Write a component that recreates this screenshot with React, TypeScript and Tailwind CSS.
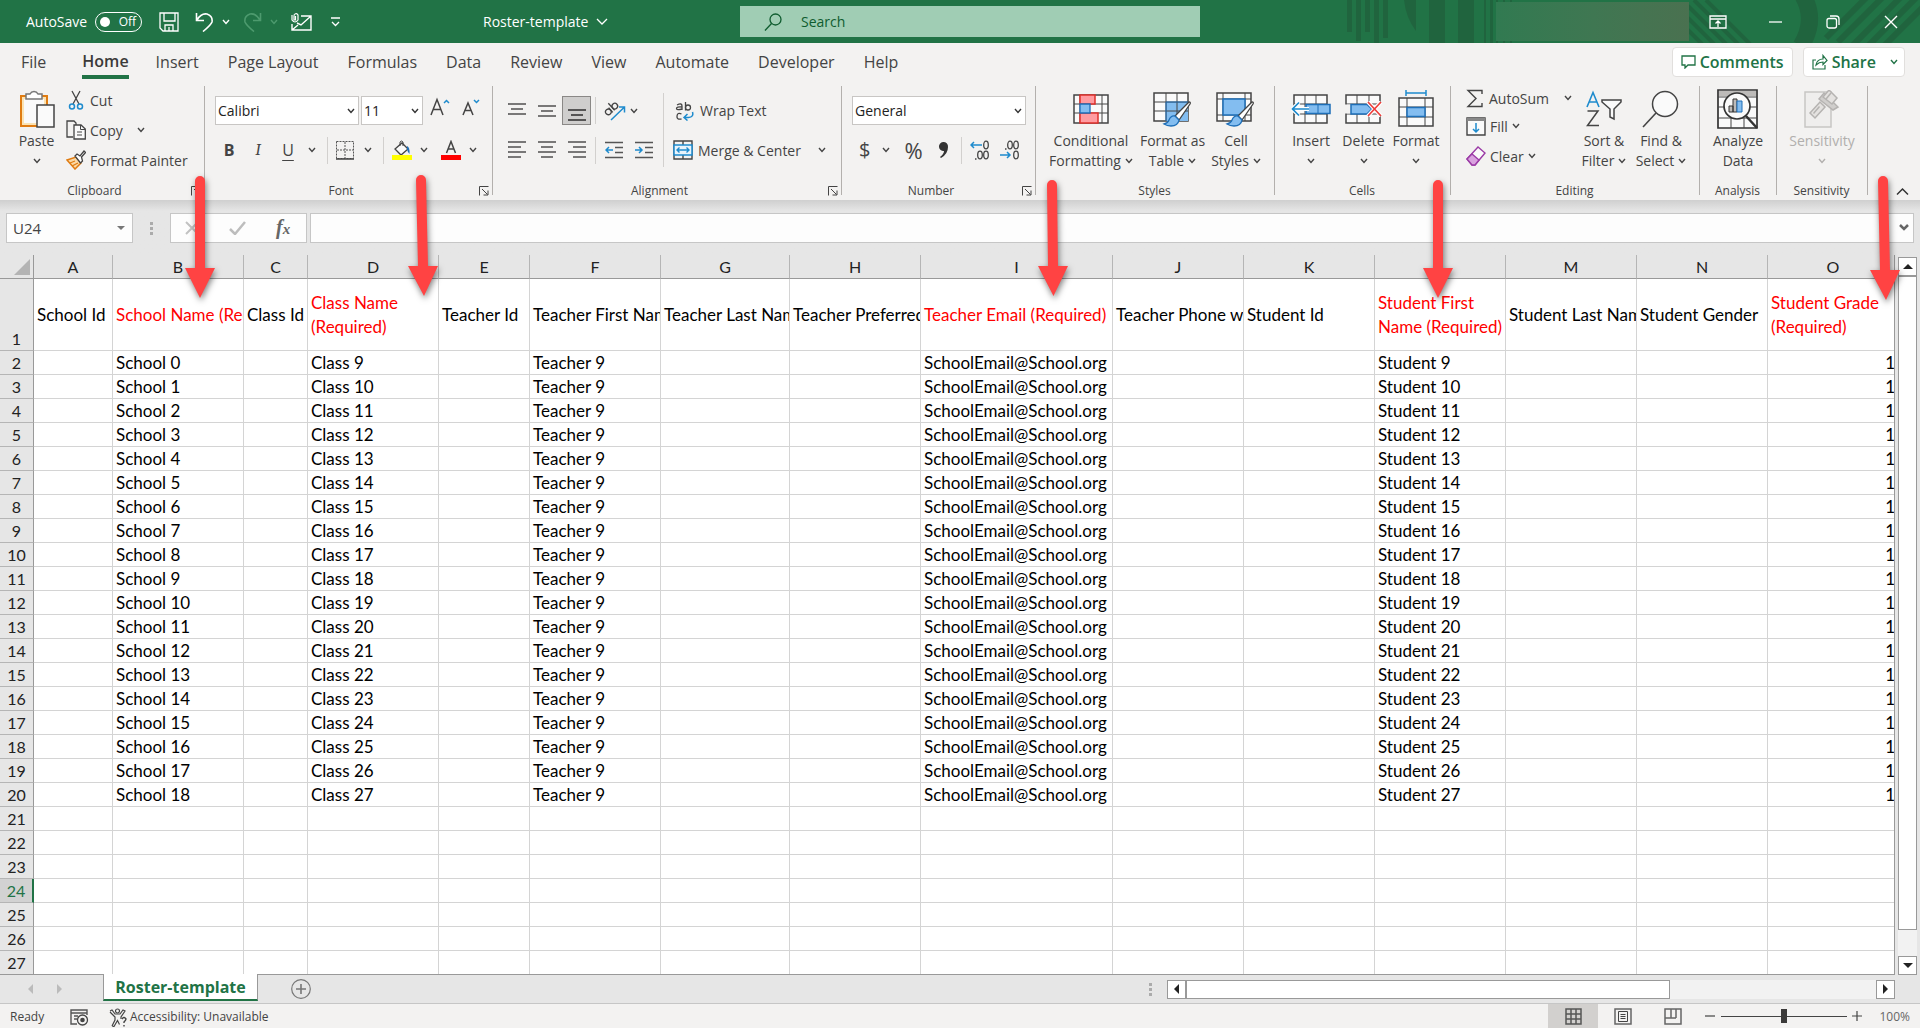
import React from "react";

const MENU_TABS = ["Insert", "Page Layout", "Formulas", "Data", "Review", "View", "Automate", "Developer", "Help"];

interface Column {
  letter: string;
  width: string;
  title: string;
  required?: boolean;
  wrap?: boolean;
}

const COLUMNS: Column[] = [
  { letter: "A", width: "w-[79px]", title: "School Id" },
  { letter: "B", width: "w-[131px]", title: "School Name (Required)", required: true },
  { letter: "C", width: "w-[64px]", title: "Class Id" },
  { letter: "D", width: "w-[131px]", title: "Class Name (Required)", required: true, wrap: true },
  { letter: "E", width: "w-[91px]", title: "Teacher Id" },
  { letter: "F", width: "w-[131px]", title: "Teacher First Name" },
  { letter: "G", width: "w-[129px]", title: "Teacher Last Name" },
  { letter: "H", width: "w-[131px]", title: "Teacher Preferred Name" },
  { letter: "I", width: "w-[192px]", title: "Teacher Email (Required)", required: true },
  { letter: "J", width: "w-[131px]", title: "Teacher Phone w/ Code" },
  { letter: "K", width: "w-[131px]", title: "Student Id" },
  { letter: "L", width: "w-[131px]", title: "Student First Name (Required)", required: true, wrap: true },
  { letter: "M", width: "w-[131px]", title: "Student Last Name" },
  { letter: "N", width: "w-[131px]", title: "Student Gender" },
  { letter: "O", width: "", title: "Student Grade (Required)", required: true, wrap: true },
];

const ROW_NUMBERS = Array.from({ length: 26 }, (_, i) => i + 2);
const SELECTED_ROW = 24;

function cellValue(letter: string, row: number) {
  if (row > 20) return "";
  switch (letter) {
    case "B":
      return `School ${row - 2}`;
    case "D":
      return `Class ${row + 7}`;
    case "F":
      return "Teacher 9";
    case "I":
      return "SchoolEmail@School.org";
    case "L":
      return `Student ${row + 7}`;
    case "O":
      return "1";
    default:
      return "";
  }
}

/* ---------- small shared pieces ---------- */

function Svg({ w, h, children, className = "" }: { w: number; h: number; children: React.ReactNode; className?: string }) {
  return (
    <svg width={w} height={h} viewBox={`0 0 ${w} ${h}`} fill="none" className={`shrink-0 ${className}`} aria-hidden="true">
      {children}
    </svg>
  );
}

function Chevron({ className = "" }: { className?: string }) {
  return (
    <Svg w={8} h={6} className={className}>
      <path d="M1 1l3 3.5L7 1" stroke="currentColor" strokeWidth="1.4" />
    </Svg>
  );
}

function Launcher() {
  return (
    <button aria-label="More options" className="flex w-[14px] justify-center">
      <Svg w={10} h={10}>
        <path d="M.5 9.5V.5h9M3 3l5.5 5.5M9 4.5V9H4.5" stroke="#444" />
      </Svg>
    </button>
  );
}

function Group({ label, width, launcher, children }: { label: string; width: string; launcher?: boolean; children: React.ReactNode }) {
  return (
    <section className={`flex h-[109px] shrink-0 flex-col border-r border-[#b3b0ad] ${width}`}>
      <div className="flex flex-1">{children}</div>
      <div className="flex h-[9px] items-center pr-px text-[12px] leading-[9px] text-[#444]">
        <span className="flex-1 text-center">{label}</span>
        {launcher && <Launcher />}
      </div>
    </section>
  );
}

function LargeButton({ icon, first, second, menu, width, disabled }: { icon: React.ReactNode; first: string; second?: string; menu?: boolean; width: string; disabled?: boolean }) {
  return (
    <button disabled={disabled} className={`flex shrink-0 flex-col items-center whitespace-nowrap leading-5 ${width} ${disabled ? "text-[#b1afad]" : ""}`}>
      <span className="flex h-[45px] items-center justify-center">{icon}</span>
      <span>{first}</span>
      <span className="flex h-5 items-center gap-1">
        {second}
        {menu && <Chevron />}
      </span>
    </button>
  );
}

function Divider({ className }: { className: string }) {
  return <span className={`w-px shrink-0 bg-[#d2d0ce] ${className}`} />;
}

/* ---------- ribbon icons ---------- */

function Lines({ rows, color = "#444" }: { rows: number[][]; color?: string }) {
  return (
    <Svg w={18} h={18}>
      {rows.map(([x, y, len]) => (
        <path key={y} d={`M${x} ${y}h${len}`} stroke={color} strokeWidth="1.4" />
      ))}
    </Svg>
  );
}

function PasteIcon() {
  return (
    <Svg w={36} h={40}>
      <path d="M2 7h26v30H2z" fill="#fbe3b3" stroke="#e07c12" strokeWidth="2" />
      <path d="M5 10h20v24H5z" fill="#fafafa" />
      <path d="M7 10V5h4a4.500 4.500 0 0 1 8 0h4v5z" fill="#fff" stroke="#777" strokeWidth="1.500" />
      <path d="M18 16h17v22H18z" fill="#fafafa" stroke="#444" strokeWidth="1.500" />
    </Svg>
  );
}

function CutIcon() {
  return (
    <Svg w={20} h={20}>
      <path d="M6 1l7 13M14 1L7 14" stroke="#444" strokeWidth="1.300" />
      <circle cx="6" cy="16.500" r="2.500" stroke="#1e8bcd" strokeWidth="1.500" />
      <circle cx="14" cy="16.500" r="2.500" stroke="#1e8bcd" strokeWidth="1.500" />
    </Svg>
  );
}

function CopyIcon() {
  return (
    <Svg w={20} h={20}>
      <path d="M7 17H1V1h7l2 2v2" stroke="#444" strokeWidth="1.300" />
      <path d="M8 5h7l4.300 4v10H8z" fill="#fafafa" stroke="#444" strokeWidth="1.300" />
      <path d="M14.500 5v4.500H19M11 12h5M11 15h5" stroke="#444" />
    </Svg>
  );
}

function PainterIcon() {
  return (
    <Svg w={20} h={20}>
      <path d="M1 10l9-3 5 6-6 6z" fill="#fbd9a6" stroke="#e07c12" strokeWidth="1.500" />
      <path d="M4 13l5-2M6 16l6-3" stroke="#e07c12" strokeWidth="1.300" />
      <path d="M9 6l2-2 3 2 4-5 1.500 1.500-4 4.500 1 4-2 2z" fill="#fff" stroke="#444" strokeWidth="1.300" />
    </Svg>
  );
}

function GrowFontIcon({ shrink }: { shrink?: boolean }) {
  return (
    <Svg w={20} h={20}>
      {shrink ? (
        <>
          <path d="M2 19L7 7 12 19M3.800 14.500h6.400" stroke="#444" strokeWidth="1.500" />
          <path d="M13 4l2.500 2.500L18 4" stroke="#1e8bcd" strokeWidth="1.500" />
        </>
      ) : (
        <>
          <path d="M1 19L7 3.500 13 19M3.200 13.500h7.600" stroke="#444" strokeWidth="1.500" />
          <path d="M14 7l2.500-2.500L19 7" stroke="#1e8bcd" strokeWidth="1.500" />
        </>
      )}
    </Svg>
  );
}

function BordersIcon() {
  return (
    <Svg w={18} h={19}>
      <path d="M.5.5h17v17H.5zM9 1v16M1 9h16" stroke="#555" strokeDasharray="2 1" />
      <path d="M0 18h18" stroke="#444" strokeWidth="1.500" />
    </Svg>
  );
}

function BucketIcon() {
  return (
    <Svg w={20} h={20}>
      <path d="M3 9l7-6 6 6-7 6z" fill="#fafafa" stroke="#444" strokeWidth="1.300" />
      <path d="M8 6V2q1.500-2 3 0v4" stroke="#444" />
      <path d="M15 6q3 1 2.500 8-2-2-2.500-5z" fill="#1e6fb8" />
      <path d="M0 15h20v5H0z" fill="#ffff00" />
    </Svg>
  );
}

function FontColorIcon() {
  return (
    <Svg w={20} h={20}>
      <path d="M5.500 13L10 1.500 14.500 13M7 9h6" stroke="#444" strokeWidth="1.500" />
      <path d="M0 15h20v5H0z" fill="#ff0000" />
    </Svg>
  );
}

function OrientationIcon() {
  return (
    <Svg w={22} h={20}>
      <g stroke="#444" strokeWidth="1.300" transform="rotate(-42 8 9)">
        <circle cx="4" cy="8" r="2.800" />
        <path d="M7 5v6.300" />
        <path d="M9.800 1.500v9.500" />
        <circle cx="12.700" cy="8" r="2.800" />
      </g>
      <path d="M7 19L20 6.500M15 6h5.500v5.500" stroke="#1e8bcd" strokeWidth="1.500" />
    </Svg>
  );
}

function IndentIcon({ right }: { right?: boolean }) {
  return (
    <Svg w={18} h={18}>
      <path d="M0 1.500h18M10 6.500h8M10 11.500h8M0 16.500h18" stroke="#555" strokeWidth="1.400" />
      <path d={right ? "M0 9h7M4 6l3 3-3 3" : "M8 9H1M4 6L1 9l3 3"} stroke="#1e8bcd" strokeWidth="1.500" />
    </Svg>
  );
}

function WrapIcon() {
  return (
    <Svg w={20} h={20}>
      <g stroke="#444" strokeWidth="1.300">
        <path d="M2 4q5-2.500 5 1v4M7 6Q1.500 5.500 1.500 7.500T7 8" />
        <path d="M10.500 1v8.500" />
        <circle cx="13" cy="6.500" r="2.500" />
        <path d="M6.500 13q-4-2-4.500 2t4.500 3" />
      </g>
      <path d="M17.500 11q1.500 5-4 5.500H9.500M12.500 13L9 16.500l3.500 3" stroke="#1e8bcd" strokeWidth="1.500" />
    </Svg>
  );
}

function MergeIcon() {
  return (
    <Svg w={20} h={20}>
      <path d="M1 1h18v18H1zM10 1v4M10 15v4" stroke="#444" strokeWidth="1.400" />
      <path d="M1 5h18v10H1z" fill="#e8f3fb" stroke="#1e8bcd" strokeWidth="1.500" />
      <path d="M4 10h12M6.500 7.500L4 10l2.500 2.500M13.500 7.500L16 10l-2.500 2.500" stroke="#1e8bcd" strokeWidth="1.400" />
    </Svg>
  );
}

function DecimalIcon({ decrease }: { decrease?: boolean }) {
  return (
    <Svg w={20} h={20}>
      <g stroke="#444" strokeWidth="1.300">
        <ellipse cx="16" cy="5" rx="2.300" ry="3.800" />
        <ellipse cx="16" cy="15" rx="2.300" ry="3.800" />
        <ellipse cx="10" cy={decrease ? 5 : 15} rx="2.300" ry="3.800" />
      </g>
      <path d={decrease ? "M5 9h1.500" : "M5 19h1.500"} stroke="#444" strokeWidth="1.500" />
      <path d={decrease ? "M0 15h10M7 12l3 3-3 3" : "M12 5H1M4 2L1 5l3 3"} stroke="#1e8bcd" strokeWidth="1.500" />
    </Svg>
  );
}

function ConditionalIcon() {
  return (
    <Svg w={36} h={32}>
      <path d="M1 2h34v28H1z" fill="#fafafa" stroke="#444" strokeWidth="1.500" />
      <path d="M1 11h34M1 20h34M7 2v28M29 2v28" stroke="#444" />
      <path d="M7 2h15v9H7zM7 20h18v10H7z" fill="#ff9ba0" stroke="#e0302b" strokeWidth="1.500" />
      <path d="M7 11h10v9H7z" fill="#83bdf0" stroke="#1e6fb8" strokeWidth="1.300" />
    </Svg>
  );
}

function Brush() {
  return (
    <>
      <path d="M36 11q2 0 1 2L26 29l-4-4z" fill="#fff" stroke="#444" strokeWidth="1.300" />
      <path d="M22 25l4 4q-1 6-8 6-4 0-7-2 4-1 5-4 2-5 6-4z" fill="#83bdf0" stroke="#1e6fb8" strokeWidth="1.300" />
    </>
  );
}

function FormatTableIcon() {
  return (
    <Svg w={40} h={36}>
      <path d="M1 2h34v28H1z" fill="#fafafa" stroke="#444" strokeWidth="1.500" />
      <path d="M13 11h22v19H13z" fill="#83bdf0" />
      <path d="M1 11h34M1 20h34M13 2v28M24 2v28" stroke="#444" />
      <path d="M13 30V11h22" stroke="#1e6fb8" />
      <Brush />
    </Svg>
  );
}

function CellStylesIcon() {
  return (
    <Svg w={40} h={36}>
      <path d="M1 2h34v28H1z" fill="#fafafa" stroke="#444" strokeWidth="1.500" />
      <path d="M1 8h34M1 24h34M7 2v28M29 2v28" stroke="#444" />
      <path d="M7 8h22v16H7z" fill="#83bdf0" stroke="#1e6fb8" strokeWidth="1.500" />
      <Brush />
    </Svg>
  );
}

function InsertIcon() {
  return (
    <Svg w={40} h={30}>
      <path d="M3 1h33v28H3z" fill="#fafafa" stroke="#444" strokeWidth="1.500" />
      <path d="M14 1v28M25 1v28M3 10h33M3 20h33" stroke="#444" />
      <path d="M15 10.500h24v9H15z" fill="#83bdf0" stroke="#1e6fb8" strokeWidth="1.500" />
      <path d="M27 10v10" stroke="#1e6fb8" />
      <path d="M18 15H2M8 8.500L1.500 15 8 21.500" stroke="#fff" strokeWidth="4" />
      <path d="M18 15H2M8 8.500L1.500 15 8 21.500" stroke="#1e8bcd" strokeWidth="1.700" />
    </Svg>
  );
}

function DeleteIcon() {
  return (
    <Svg w={38} h={30}>
      <path d="M1 1h34v28H1z" fill="#fafafa" stroke="#444" strokeWidth="1.500" />
      <path d="M12 1v28M24 1v28M1 10h34M1 20h34" stroke="#444" />
      <path d="M0 10.500h6v9H0zM27 11h10v8H27z" fill="#f3f2f1" />
      <path d="M6 10.500h16l5 4.500-5 5H6z" fill="#83bdf0" stroke="#1e6fb8" strokeWidth="1.500" />
      <path d="M23 8l13 14M36 8L23 22" stroke="#fff" strokeWidth="4" />
      <path d="M23 8l13 14M36 8L23 22" stroke="#ee3e3a" strokeWidth="1.700" />
    </Svg>
  );
}

function FormatIcon() {
  return (
    <Svg w={36} h={38}>
      <path d="M8 3h20M8 0v6M28 0v6" stroke="#1e8bcd" strokeWidth="1.500" />
      <path d="M1 8h34v28H1z" fill="#fafafa" stroke="#444" strokeWidth="1.500" />
      <path d="M9 8v28M27 8v28M1 17h34M1 27h34" stroke="#444" />
      <path d="M9 17.500h18v9H9z" fill="#83bdf0" stroke="#1e6fb8" strokeWidth="1.500" />
    </Svg>
  );
}

function SortIcon() {
  return (
    <Svg w={36} h={38}>
      <path d="M1 17L7 2.500 13 17M3.200 12h7.600" stroke="#1e8bcd" strokeWidth="1.600" />
      <path d="M1.500 21H12L1.500 35.500H13" stroke="#444" strokeWidth="1.500" />
      <path d="M16 10h19v2l-7 7v10l-4-2v-8l-8-7z" fill="#fafafa" stroke="#444" strokeWidth="1.500" />
    </Svg>
  );
}

function FindIcon() {
  return (
    <Svg w={38} h={38}>
      <circle cx="23" cy="14" r="12.500" fill="#fafafa" stroke="#444" strokeWidth="1.500" />
      <path d="M14 23L1 37" stroke="#444" strokeWidth="1.600" />
    </Svg>
  );
}

function AnalyzeIcon() {
  return (
    <Svg w={42} h={40}>
      <path d="M1 1h39v38H1z" fill="#fafafa" stroke="#333" strokeWidth="1.700" />
      <path d="M2 2h37v5H2z" fill="#bdbbb9" />
      <path d="M1 8h39M1 18h39M1 29h39M14 29v10M27 29v10" stroke="#444" />
      <circle cx="20" cy="17" r="13" fill="#fafafa" stroke="#333" strokeWidth="1.700" />
      <path d="M12 17h4v6h-4zM16 10h4v13h-4z" fill="#bdbbb9" stroke="#333" />
      <path d="M20 12h5v11h-5z" fill="#83bdf0" stroke="#1e6fb8" />
      <path d="M29 27l11 12" stroke="#333" strokeWidth="2.500" />
    </Svg>
  );
}

function SensitivityIcon() {
  return (
    <Svg w={36} h={38}>
      <path d="M1 2h26v35H1z" fill="#efeeed" stroke="#c8c6c4" strokeWidth="1.500" />
      <g stroke="#b5b3b1" strokeWidth="1.500" fill="#e4e2e0">
        <path d="M6 23l10-11 5 5-10 11z" />
        <path d="M9.500 23.500l6-7" />
        <path d="M15 9l5-6 14 14-5 3z" fill="#d0cecc" />
        <path d="M19 7l6-7 8 8-5 6z" />
        <path d="M22 9l5-6" />
      </g>
    </Svg>
  );
}

/* ---------- title bar ---------- */

function TitleArt() {
  return (
    <svg className="absolute right-0 top-0" width="580" height="43" viewBox="1340 0 580 43" fill="none" aria-hidden="true">
      <path
        fill="#20643e"
        d="M1347 0h5v32h-5zM1356 0h5v41h-5zM1365 0h5v32h-5zM1374 0h5v43h-5zM1383 0h5v38h-5zM1404 0h12v31Q1406 18 1404 0zM1429 0h16v43h-16zM1458 0h16v43h-16zM1484 0h2v43h-2zM1490 0h3v43h-3zM1496 0h2v43h-2zM1503 0h2v43h-2zM1510 0h2v43h-2z"
      />
      <g stroke="#20643e" strokeWidth="4">
        <path d="M1688 30l14 14M1688 18l26 26M1688 6l38 38M1694 0l44 44M1706 0l44 44" />
      </g>
      <path d="M1803-4q14 24-2 50" stroke="#20643e" strokeWidth="17" />
      <g stroke="#20643e" strokeWidth="6">
        <path d="M1826 38l40-40M1838 42l44-44M1852 46l48-48M1868 46l48-48M1884 46l40-40" />
      </g>
    </svg>
  );
}

function TitleBar() {
  return (
    <header className="relative flex h-[43px] shrink-0 items-center bg-[#217346] text-[14px] text-white">
      <TitleArt />
      <div className="flex w-[483px] shrink-0 items-center pl-[26px]">
        <label htmlFor="autosave">AutoSave</label>
        <button id="autosave" role="switch" aria-checked="false" className="ml-2 flex h-5 w-[47px] items-center justify-between rounded-full border border-white px-1 text-[12px] leading-none">
          <span className="size-[10px] rounded-full bg-white" />
          <span className="pr-px">Off</span>
        </button>
        <button aria-label="Save" className="ml-[17px]">
          <Svg w={20} h={20}>
            <path d="M1 1h18v18H4l-3-3zM5 1v8h11V1M6 19v-6h8v6M10 15v4" stroke="#fff" strokeWidth="1.300" />
          </Svg>
        </button>
        <button aria-label="Undo" className="ml-4 flex items-center gap-2">
          <Svg w={19} h={20}>
            <path d="M1.500 1v7.500H9M2 8Q6 1 12 2q6 2 5 8-1 3-9 9.500" stroke="#fff" strokeWidth="1.600" />
          </Svg>
          <Chevron />
        </button>
        <button aria-label="Redo" disabled className="ml-[13px] flex items-center gap-2 text-[#4d9a6e]">
          <Svg w={19} h={20}>
            <path d="M17.500 1v7.500H10M17 8Q13 1 7 2 1 4 2 10q1 3 9 9.500" stroke="currentColor" strokeWidth="1.600" />
          </Svg>
          <Chevron />
        </button>
        <button aria-label="Email" className="ml-[13px]">
          <Svg w={21} h={18}>
            <path d="M10 3h10v14H1V11M20 3L10 12l-4-2M1 17l6-5" stroke="#fff" strokeWidth="1.400" />
            <path d="M1 2v5q3 4 6 0V2q-1-2-3-1-1 0-1 2v4h1.500V3" stroke="#fff" strokeWidth="1.200" />
          </Svg>
        </button>
        <button aria-label="Customize toolbar" className="ml-[19px]">
          <Svg w={9} h={10}>
            <path d="M0 1h9M1 5l3.500 3.500L8 5" stroke="#fff" strokeWidth="1.300" />
          </Svg>
        </button>
      </div>
      <div className="flex flex-1 items-center">
        <button className="flex w-[257px] shrink-0 items-center gap-2 text-[14px]">
          Roster-template
          <Svg w={12} h={8}>
            <path d="M1 1l5 5 5-5" stroke="#fff" strokeWidth="1.300" />
          </Svg>
        </button>
        <div className="flex h-[31px] w-[460px] items-center bg-[#a0cdb4] pl-6 text-[#0f5c2f]">
          <Svg w={18} h={18}>
            <circle cx="11.500" cy="6.500" r="5.500" stroke="#0f5c2f" strokeWidth="1.300" />
            <path d="M7.500 10.500L1 17.500" stroke="#0f5c2f" strokeWidth="1.300" />
          </Svg>
          <input aria-label="Search" placeholder="Search" className="ml-[19px] flex-1 bg-transparent outline-none placeholder:text-[#0f5c2f]" />
        </div>
      </div>
      <div className="z-10 flex shrink-0 items-center">
        <div className="mr-5 h-[39px] w-[193px] self-start bg-linear-to-r from-[#317a51] via-[#3f7752] to-[#4a7150]" />
        <button aria-label="Ribbon display options">
          <Svg w={18} h={14}>
            <path d="M1 1h16v12H1zM1 4h16M9 12V6M6.500 8.500L9 6l2.500 2.500" stroke="#fff" strokeWidth="1.300" />
          </Svg>
        </button>
        <button aria-label="Minimize" className="ml-[42px]">
          <Svg w={13} h={14}>
            <path d="M0 7h13" stroke="#fff" strokeWidth="1.300" />
          </Svg>
        </button>
        <button aria-label="Restore" className="ml-11">
          <Svg w={14} h={14}>
            <rect x="1" y="3.500" width="9.500" height="9.500" rx="2" stroke="#fff" strokeWidth="1.300" />
            <path d="M4 1h6q3 0 3 3v6" stroke="#fff" strokeWidth="1.300" />
          </Svg>
        </button>
        <button aria-label="Close" className="ml-11 mr-[22px]">
          <Svg w={14} h={14}>
            <path d="M1 1l12 12M13 1L1 13" stroke="#fff" strokeWidth="1.400" />
          </Svg>
        </button>
      </div>
    </header>
  );
}

/* ---------- ribbon ---------- */

function MenuTabs() {
  return (
    <nav className="flex h-[43px] shrink-0 items-center pb-[5px] pl-[21px] pr-[15px] text-[16px] text-[#444]">
      <button>File</button>
      <button className="ml-9 h-[34px] border-b-4 border-[#217346] font-semibold leading-[32px] text-[#3b3a39]">Home</button>
      <div className="ml-[27px] flex flex-1 gap-[29px]">
        {MENU_TABS.map((t) => (
          <button key={t}>{t}</button>
        ))}
      </div>
      <button className="flex h-[30px] items-center gap-1 rounded border border-[#e1dfdd] bg-white px-2 font-semibold text-[#217346]">
        <Svg w={15} h={14}>
          <path d="M1 1h13v9H7l-3 3v-3H1z" stroke="#217346" strokeWidth="1.300" />
        </Svg>
        Comments
      </button>
      <button className="ml-[10px] flex h-[30px] items-center gap-1 rounded border border-[#e1dfdd] bg-white pl-2 pr-[6px] font-semibold text-[#217346]">
        <Svg w={16} h={16}>
          <path d="M4 6H1v9h12v-4M4 11q1-6 7-6V1.500L15 6.500l-4 4V8Q7 8 4 11z" stroke="#217346" strokeWidth="1.200" />
        </Svg>
        Share
        <Chevron className="ml-[10px]" />
      </button>
    </nav>
  );
}

function Combo({ label, value, width }: { label: string; value: string; width: string }) {
  return (
    <div className={`relative h-[29px] ${width}`}>
      <select aria-label={label} className="h-full w-full appearance-none border border-[#c8c6c4] bg-white pl-[2px] text-[14px] text-[#222]" defaultValue={value}>
        <option>{value}</option>
      </select>
      <Chevron className="pointer-events-none absolute right-1 top-3 text-[#333]" />
    </div>
  );
}

function Ribbon() {
  return (
    <div className="flex h-[114px] shrink-0 text-[14px] text-[#444]">
      <Group label="Clipboard" width="w-[205px]" launcher>
        <LargeButton icon={<PasteIcon />} first="Paste" menu width="w-[59px] ml-[7px]" />
        <div className="-mt-px flex flex-col">
          {[
            { icon: <CutIcon />, text: "Cut" },
            { icon: <CopyIcon />, text: "Copy", menu: true },
            { icon: <PainterIcon />, text: "Format Painter" },
          ].map((item) => (
            <button key={item.text} className="flex h-[30px] items-center gap-1 whitespace-nowrap">
              {item.icon}
              {item.text}
              {item.menu && <Chevron className="ml-[10px]" />}
            </button>
          ))}
        </div>
      </Group>

      <Group label="Font" width="w-[288px]" launcher>
        <div className="flex flex-1 flex-col pl-[10px]">
          <div className="mt-[10px] flex h-[29px] items-center">
            <Combo label="Font name" value="Calibri" width="w-[144px]" />
            <Combo label="Font size" value="11" width="w-[62px] ml-[2px]" />
            <button aria-label="Increase font size" className="ml-[7px] self-start">
              <GrowFontIcon />
            </button>
            <button aria-label="Decrease font size" className="ml-[11px] self-start">
              <GrowFontIcon shrink />
            </button>
          </div>
          <div className="mt-[11px] flex h-7 items-center">
            <button className="w-[28px] text-[16px] font-bold">B</button>
            <button className="w-[30px] font-serif text-[17px] italic">I</button>
            <button className="w-[30px] text-[16px] underline underline-offset-4">U</button>
            <Chevron className="ml-[5px]" />
            <Divider className="ml-[11px] h-[27px]" />
            <button aria-label="Borders" className="ml-2 flex items-center gap-[10px]">
              <BordersIcon />
              <Chevron />
            </button>
            <Divider className="ml-[11px] h-[27px]" />
            <button aria-label="Fill color" className="ml-2 flex items-center gap-2">
              <BucketIcon />
              <Chevron />
            </button>
            <button aria-label="Font color" className="ml-[13px] flex items-center gap-2">
              <FontColorIcon />
              <Chevron />
            </button>
          </div>
        </div>
      </Group>

      <Group label="Alignment" width="w-[349px]" launcher>
        <div className="flex flex-col pl-[9px]">
          <div className="mt-[10px] flex h-[29px] items-center">
            <button aria-label="Top align" className="flex w-[30px] justify-center">
              <Lines rows={[[0, 2, 18], [3, 7, 12], [0, 12, 18]]} />
            </button>
            <button aria-label="Middle align" className="flex w-[30px] justify-center">
              <Lines rows={[[0, 4, 18], [3, 9, 12], [0, 14, 18]]} />
            </button>
            <button aria-label="Bottom align" className="flex h-[29px] w-[29px] items-end justify-center border border-[#8a8886] bg-[#cfcecd] pb-[2px]">
              <Lines rows={[[0, 6, 18], [3, 11, 12], [0, 16, 18]]} color="#222" />
            </button>
            <Divider className="ml-1 h-[27px]" />
            <button aria-label="Orientation" className="ml-2 flex items-center gap-1">
              <OrientationIcon />
              <Chevron />
            </button>
          </div>
          <div className="mt-[11px] flex h-7 items-center">
            <button aria-label="Align left" className="flex w-[30px] justify-center">
              <Lines rows={[[0, 1, 18], [0, 6, 13], [0, 11, 18], [0, 16, 13]]} />
            </button>
            <button aria-label="Center" className="flex w-[30px] justify-center">
              <Lines rows={[[0, 1, 18], [3, 6, 12], [0, 11, 18], [3, 16, 12]]} />
            </button>
            <button aria-label="Align right" className="flex w-[29px] justify-center">
              <Lines rows={[[0, 1, 18], [5, 6, 13], [0, 11, 18], [5, 16, 13]]} />
            </button>
            <Divider className="ml-1 h-[27px]" />
            <button aria-label="Decrease indent" className="ml-[9px]">
              <IndentIcon />
            </button>
            <button aria-label="Increase indent" className="ml-3">
              <IndentIcon right />
            </button>
          </div>
        </div>
        <Divider className="ml-[10px] mt-[7px] h-[74px]" />
        <div className="flex flex-col pl-[9px]">
          <button className="mt-[10px] flex h-[29px] items-center gap-[5px] pl-[2px]">
            <WrapIcon />
            Wrap Text
          </button>
          <button className="mt-[11px] flex h-7 items-center gap-[5px] whitespace-nowrap">
            <MergeIcon />
            Merge &amp; Center
            <Chevron className="ml-3" />
          </button>
        </div>
      </Group>

      <Group label="Number" width="w-[194px]" launcher>
        <div className="flex flex-1 flex-col pl-[10px]">
          <div className="mt-[10px] flex">
            <Combo label="Number format" value="General" width="w-[174px]" />
          </div>
          <div className="mt-[11px] flex h-7 items-center">
            <button aria-label="Accounting format" className="flex items-center gap-3 pl-[7px] text-[20px]">
              $
              <Chevron />
            </button>
            <button className="ml-[14px] text-[22px]">%</button>
            <button aria-label="Comma style" className="ml-[15px]">
              <Svg w={11} h={18}>
                <path d="M5 1a4.500 4.500 0 0 1 5 5q0 7-7 11l-1-1q4-3 4-6A4.500 4.500 0 0 1 5 1z" fill="#333" />
              </Svg>
            </button>
            <Divider className="ml-3 h-[27px]" />
            <button aria-label="Increase decimal" className="ml-2">
              <DecimalIcon />
            </button>
            <button aria-label="Decrease decimal" className="ml-[10px]">
              <DecimalIcon decrease />
            </button>
          </div>
        </div>
      </Group>

      <Group label="Styles" width="w-[239px]">
        <LargeButton icon={<ConditionalIcon />} first="Conditional" second="Formatting" menu width="w-[90px] ml-[10px]" />
        <LargeButton icon={<FormatTableIcon />} first="Format as" second="Table" menu width="w-[73px]" />
        <LargeButton icon={<CellStylesIcon />} first="Cell" second="Styles" menu width="w-[54px]" />
      </Group>

      <Group label="Cells" width="w-[176px]">
        <LargeButton icon={<InsertIcon />} first="Insert" menu width="w-[52px] ml-[10px]" />
        <LargeButton icon={<DeleteIcon />} first="Delete" menu width="w-[53px]" />
        <LargeButton icon={<FormatIcon />} first="Format" menu width="w-[52px]" />
      </Group>

      <Group label="Editing" width="w-[249px]">
        <div className="flex w-[123px] flex-col pl-[15px]">
          <button className="flex h-6 items-center gap-[5px]">
            <Svg w={18} h={19}>
              <path d="M16 5V1.500H2L10 9.500 2 17.500h14V14" stroke="#444" strokeWidth="1.400" />
            </Svg>
            AutoSum
            <Chevron className="ml-[10px]" />
          </button>
          <button className="mt-[2px] flex h-7 items-center gap-1">
            <Svg w={20} h={19}>
              <path d="M1 1h18v17H1z" fill="#fafafa" stroke="#444" strokeWidth="1.400" />
              <path d="M1 2.500h18" stroke="#888" strokeWidth="3" />
              <path d="M10 6v9M7 12l3 3 3-3" stroke="#1e8bcd" strokeWidth="1.500" />
            </Svg>
            Fill
            <Chevron />
          </button>
          <button className="mt-[2px] flex h-7 items-center gap-1">
            <Svg w={20} h={20}>
              <path d="M1 13L12 1l7 6L9 19H6z" fill="#fafafa" stroke="#9b3ba6" strokeWidth="1.400" />
              <path d="M1 13l5-5 7 6-4 5H6z" fill="#d9a2df" stroke="#9b3ba6" strokeWidth="1.400" />
            </Svg>
            Clear
            <Chevron />
          </button>
        </div>
        <LargeButton icon={<SortIcon />} first="Sort &" second="Filter" menu width="w-[60px]" />
        <LargeButton icon={<FindIcon />} first="Find &" second="Select" menu width="w-[54px]" />
      </Group>

      <Group label="Analysis" width="w-[77px]">
        <LargeButton icon={<AnalyzeIcon />} first="Analyze" second="Data" width="w-full" />
      </Group>

      <Group label="Sensitivity" width="w-[91px]">
        <LargeButton icon={<SensitivityIcon />} first="Sensitivity" menu width="w-full" disabled />
      </Group>

      <div className="flex flex-1 items-end justify-end pb-1 pr-[11px]">
        <button aria-label="Collapse ribbon">
          <Svg w={13} h={9}>
            <path d="M1 7.500L6.500 2 12 7.500" stroke="#333" strokeWidth="1.500" />
          </Svg>
        </button>
      </div>
    </div>
  );
}

/* ---------- formula bar ---------- */

function Dots() {
  return (
    <span className="flex flex-col gap-[2px]">
      <span className="size-[3px] bg-[#ababab]" />
      <span className="size-[3px] bg-[#ababab]" />
      <span className="size-[3px] bg-[#ababab]" />
    </span>
  );
}

function FormulaBar() {
  return (
    <div className="flex h-[55px] shrink-0 items-start bg-linear-to-b from-[#cfcfcf] to-[#e6e6e6] to-20% px-[6px] pt-[13px]">
      <div className="relative h-[30px] w-[127px]">
        <input aria-label="Name box" defaultValue="U24" className="h-full w-full border border-[#c6c6c6] bg-[#fdfdfd] pl-[6px] text-[15px] text-[#444]" />
        <Svg w={8} h={4} className="absolute right-2 top-[13px]">
          <path d="M0 0h8L4 4z" fill="#777" />
        </Svg>
      </div>
      <div className="flex h-[30px] w-[37px] items-center justify-center">
        <Dots />
      </div>
      <div className="flex h-[30px] w-[137px] items-center border border-[#c6c6c6] bg-[#fdfdfd] pl-[14px]">
        <button aria-label="Cancel">
          <Svg w={14} h={14}>
            <path d="M1 1l12 12M13 1L1 13" stroke="#c2c2c2" strokeWidth="2" />
          </Svg>
        </button>
        <button aria-label="Enter" className="ml-[30px]">
          <Svg w={17} h={14}>
            <path d="M1 8l5 5L16 1" stroke="#bdbdbd" strokeWidth="2.500" />
          </Svg>
        </button>
        <button className="ml-[30px] font-['Liberation_Serif',serif] text-[20px] font-bold italic leading-5 text-[#666]">
          f<span className="text-[15px]">x</span>
        </button>
      </div>
      <div className="relative ml-[3px] h-[30px] flex-1">
        <input aria-label="Formula" className="h-full w-full border border-[#c6c6c6] bg-[#fdfdfd] px-2" />
        <Svg w={10} h={8} className="absolute right-[5px] top-[11px]">
          <path d="M1 1l4 4 4-4" stroke="#666" strokeWidth="2.500" />
        </Svg>
      </div>
    </div>
  );
}

/* ---------- sheet ---------- */

function Sheet() {
  return (
    <div className="min-w-0 flex-1 overflow-hidden border-b border-r border-[#999] bg-white">
      {/* the last column runs a little under the right edge */}
      <table className="w-[calc(100%+5px)] table-fixed border-separate border-spacing-0 font-[Lato,sans-serif] text-[17px] leading-6 text-black">
        <colgroup>
          <col className="w-[34px]" />
          {COLUMNS.map((c) => (
            <col key={c.letter} className={c.width} />
          ))}
        </colgroup>
        <thead>
          <tr className="h-6">
            <th className="border-b border-r border-[#999] bg-[#e6e6e6] p-0">
              <Svg w={16} h={16} className="ml-[14px]">
                <path d="M16 0v16H0z" fill="#b4b4b4" />
              </Svg>
            </th>
            {COLUMNS.map((c) => (
              <th key={c.letter} scope="col" className="h-6 border-b border-r border-b-[#999] border-r-[#b5b5b5] bg-[#e6e6e6] p-0 text-[16px] font-normal leading-[23px] text-[#222]">
                {c.letter}
              </th>
            ))}
          </tr>
        </thead>
        <tbody>
          <tr className="h-[72px]">
            <th scope="row" className="border-b border-r border-b-[#b5b5b5] border-r-[#999] bg-[#e6e6e6] p-0 align-bottom text-[16px] font-normal leading-[22px] text-[#222]">
              1
            </th>
            {COLUMNS.map((c) => (
              <td
                key={c.letter}
                className={`overflow-hidden border-b border-r border-[#d4d4d4] py-0 pl-[3px] pr-0 align-middle ${c.wrap ? "" : "whitespace-nowrap"} ${c.required ? "text-[#ff0000]" : ""}`}
              >
                {c.title}
              </td>
            ))}
          </tr>
          {ROW_NUMBERS.map((row) => (
            <tr key={row} className="h-6">
              <th
                scope="row"
                className={`border-b border-b-[#b5b5b5] p-0 text-[16px] font-normal leading-[23px] ${
                  row === SELECTED_ROW ? "border-r-2 border-r-[#217346] bg-[#d2d2d2] text-[#217346]" : "border-r border-r-[#999] bg-[#e6e6e6] text-[#222]"
                }`}
              >
                {row}
              </th>
              {COLUMNS.map((c) => (
                <td key={c.letter} className={`overflow-hidden whitespace-nowrap border-b border-r border-[#d4d4d4] py-0 leading-[23px] ${c.letter === "O" ? "pr-[3px] text-right" : "pl-[3px] pr-0"}`}>
                  {cellValue(c.letter, row)}
                </td>
              ))}
            </tr>
          ))}
        </tbody>
      </table>
    </div>
  );
}

function VerticalScroll() {
  return (
    <div className="flex w-[25px] shrink-0 flex-col pl-[3px] pr-[3px] pt-[2px]">
      <button aria-label="Scroll up" className="flex h-[19px] items-center justify-center border border-[#999] bg-white">
        <Svg w={10} h={5}>
          <path d="M0 5h10L5 0z" fill="#222" />
        </Svg>
      </button>
      <div className="flex flex-1 flex-col bg-[#f2f2f2]">
        <div className="mb-[26px] flex-1 border border-[#999] bg-white" />
      </div>
      <button aria-label="Scroll down" className="flex h-[19px] items-center justify-center border border-[#999] bg-white">
        <Svg w={10} h={5}>
          <path d="M0 0h10L5 5z" fill="#222" />
        </Svg>
      </button>
    </div>
  );
}

function SheetTabs() {
  return (
    <div className="flex h-[29px] shrink-0 border-b border-[#c6c6c6]">
      <div className="flex w-[103px] items-center gap-6 pl-7">
        <button aria-label="Previous sheet">
          <Svg w={5} h={10}>
            <path d="M5 0v10L0 5z" fill="#bbb" />
          </Svg>
        </button>
        <button aria-label="Next sheet">
          <Svg w={5} h={10}>
            <path d="M0 0v10l5-5z" fill="#bbb" />
          </Svg>
        </button>
      </div>
      <button className="-mt-px h-[27px] w-[155px] border-x border-b-2 border-x-[#999] border-b-[#217346] bg-white text-[16px] font-bold leading-[22px] text-[#217346]">Roster-template</button>
      <button aria-label="New sheet" className="ml-[33px]">
        <Svg w={20} h={20}>
          <circle cx="10" cy="10" r="9.300" stroke="#777" strokeWidth="1.200" />
          <path d="M10 5v10M5 10h10" stroke="#777" strokeWidth="1.600" />
        </Svg>
      </button>
      <div className="flex-1" />
      <div className="flex w-[771px] items-center">
        <Dots />
        <button aria-label="Scroll left" className="ml-[15px] flex h-[19px] w-[19px] items-center justify-center border border-[#999] bg-white">
          <Svg w={5} h={10}>
            <path d="M5 0v10L0 5z" fill="#222" />
          </Svg>
        </button>
        <div className="flex h-[19px] flex-1 bg-[#f2f2f2]">
          <div className="w-[484px] border border-[#999] bg-white" />
        </div>
        <button aria-label="Scroll right" className="mr-[25px] flex h-[19px] w-[19px] items-center justify-center border border-[#999] bg-white">
          <Svg w={5} h={10}>
            <path d="M0 0v10l5-5z" fill="#222" />
          </Svg>
        </button>
      </div>
    </div>
  );
}

function StatusBar() {
  return (
    <footer className="flex h-6 shrink-0 items-center bg-[#f3f2f1] text-[12px] leading-4 text-[#444]">
      <span className="w-[60px] pl-[10px] pt-[2px]">Ready</span>
      <button aria-label="Record macro" className="ml-[10px] pt-[2px]">
        <Svg w={19} h={17}>
          <path d="M7 15H1V1h16v5M1 4h16M4 7h4M4 10h3" stroke="#555" strokeWidth="1.400" />
          <circle cx="12.500" cy="11" r="5" stroke="#444" strokeWidth="1.300" />
          <circle cx="12.500" cy="11" r="2.300" fill="#444" />
        </Svg>
      </button>
      <button className="ml-5 flex items-center gap-[2px] pt-[2px]">
        <Svg w={19} h={19}>
          <circle cx="8.500" cy="3" r="2" stroke="#444" strokeWidth="1.200" />
          <path d="M1 3l2-1 3 4h5l3-4 2 1-4 6v2M3 18l3-6V9L1 4M3 18l2 .5 3.500-6 2 4" stroke="#444" strokeWidth="1.200" />
          <path d="M13 11q2-3 4 0 0 1-2 3v1M15 17v1.500" stroke="#444" strokeWidth="1.400" />
        </Svg>
        Accessibility: Unavailable
      </button>
      <div className="flex-1" />
      <button aria-label="Normal view" className="flex h-full w-[50px] items-center justify-center bg-[#d2d0ce]">
        <Svg w={17} h={17}>
          <path d="M1 1h15v15H1zM6 1v15M11 1v15M1 6h15M1 11h15" stroke="#555" strokeWidth="1.500" />
        </Svg>
      </button>
      <button aria-label="Page layout view" className="flex w-[50px] justify-center">
        <Svg w={18} h={17}>
          <path d="M1 1h16v15H1z" stroke="#666" strokeWidth="1.500" />
          <path d="M4.500 3.500h9v10h-9zM6.500 6.500h5M6.500 8.500h5M6.500 10.500h5" stroke="#444" />
        </Svg>
      </button>
      <button aria-label="Page break view" className="flex w-[50px] justify-center">
        <Svg w={18} h={17}>
          <path d="M1 1h16v15H1zM7 1v9M12 1v9M1 10h11" stroke="#666" strokeWidth="1.500" />
        </Svg>
      </button>
      <button aria-label="Zoom out" className="ml-[7px]">
        <Svg w={10} h={10}>
          <path d="M0 5h10" stroke="#444" strokeWidth="1.200" />
        </Svg>
      </button>
      <input
        type="range"
        aria-label="Zoom"
        defaultValue={50}
        className="ml-[6px] h-[14px] w-[126px] appearance-none bg-[linear-gradient(#444,#444)] bg-[length:100%_1px] bg-center bg-no-repeat [&::-webkit-slider-thumb]:h-[14px] [&::-webkit-slider-thumb]:w-[6px] [&::-webkit-slider-thumb]:appearance-none [&::-webkit-slider-thumb]:bg-[#3b3a39]"
      />
      <button aria-label="Zoom in" className="ml-[5px]">
        <Svg w={10} h={10}>
          <path d="M0 5h10M5 0v10" stroke="#444" strokeWidth="1.200" />
        </Svg>
      </button>
      <button className="ml-4 mr-[10px] w-8 pt-[2px] text-right text-[#666]">100%</button>
    </footer>
  );
}

/* Red pointers laid over the required columns; lean shifts the tail to the left */
function Arrow({ className, height, lean = 0 }: { className: string; height: number; lean?: number }) {
  const neck = height - 30;
  return (
    <svg width="30" height={height} viewBox={`0 0 30 ${height}`} className={`pointer-events-none absolute drop-shadow-[1px_3px_3px_rgba(0,0,0,0.5)] ${className}`} aria-hidden="true">
      <path d={`M${10 - lean} 5a5 5 0 0 1 10 0L20 ${neck}h10L${15 + lean / 2} ${height} 0 ${neck}h10z`} fill="#ff4343" />
    </svg>
  );
}

export default function App() {
  return (
    <div className="relative flex h-screen flex-col overflow-hidden bg-[#f3f2f1] font-['Open_Sans',sans-serif]">
      <TitleBar />
      <MenuTabs />
      <Ribbon />
      <FormulaBar />
      <main className="flex min-h-0 flex-1 flex-col bg-[#e6e6e6]">
        <div className="flex min-h-0 flex-1">
          <Sheet />
          <VerticalScroll />
        </div>
        <SheetTabs />
      </main>
      <StatusBar />
      <Arrow className="left-[185px] top-[176px]" height={122} />
      <Arrow className="left-[408px] top-[175px]" height={121} lean={2} />
      <Arrow className="left-[1038px] top-[180px]" height={116} lean={1} />
      <Arrow className="left-[1423px] top-[180px]" height={118} />
      <Arrow className="left-[1870px] top-[176px]" height={124} lean={2} />
    </div>
  );
}
